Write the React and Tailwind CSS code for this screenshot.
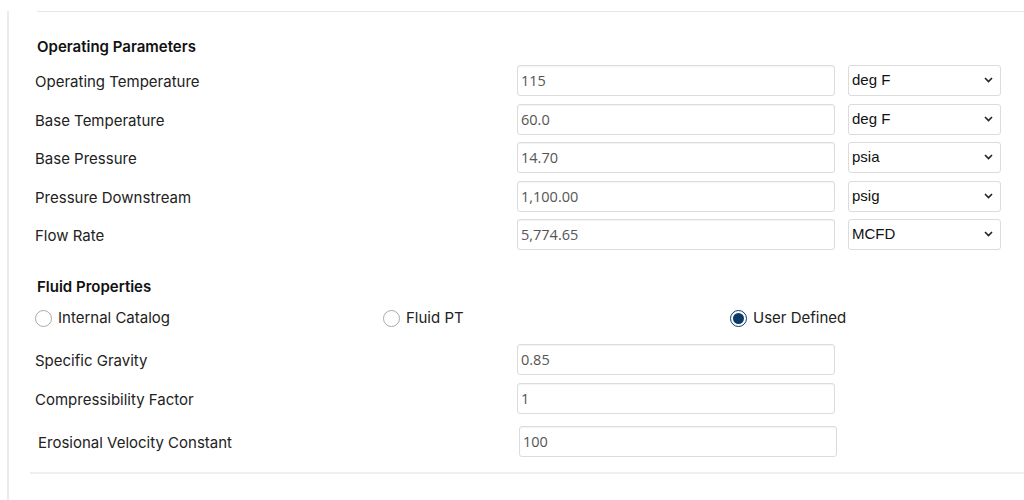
import React, { useState } from "react";

const labelFont = { fontFamily: "Inter, 'Noto Sans', sans-serif" };

const units = {
  temp: ["deg F", "deg C", "deg R", "K"],
  pres: ["psia", "kPa", "bar"],
  presg: ["psig", "kPag", "barg"],
  flow: ["MCFD", "MMCFD", "m3/d"],
};

const TextInput = ({ value, className = "" }) => (
  <input
    type="text"
    defaultValue={value}
    className={`h-[31px] w-[318px] rounded-[3px] border border-[#dcdcdc] bg-white px-[3px] text-[14.5px] text-[#555] shadow-[inset_0_1px_1px_rgba(0,0,0,0.05)] outline-none font-['Open_Sans',sans-serif] ${className}`}
  />
);

const UnitSelect = ({ options }) => (
  <div className="relative h-[31px] w-[153px]">
    <select className="h-full w-full appearance-none rounded-[3px] border border-[#dcdcdc] bg-white pl-[3px] text-[15px] text-[#111] outline-none font-['Liberation_Sans',Arial,sans-serif]">
      {options.map((o) => (
        <option key={o}>{o}</option>
      ))}
    </select>
    <svg
      className="pointer-events-none absolute right-[8px] top-[12px]"
      width="9"
      height="6"
      viewBox="0 0 9 6"
      fill="none"
      stroke="#222"
      strokeWidth="1.6"
    >
      <path d="M1 1l3.5 3.5L8 1" />
    </svg>
  </div>
);

const Row = ({ label, value, options }) => (
  <div className="flex h-[31px] items-center">
    <div className="w-[482px] pt-[4px] text-[15px] text-[#222]" style={labelFont}>
      {label}
    </div>
    <TextInput value={value} />
    {options && (
      <div className="ml-[13px]">
        <UnitSelect options={options} />
      </div>
    )}
  </div>
);

const Radio = ({ label, checked, onClick }) => (
  <button type="button" onClick={onClick} className="flex items-center gap-[6px]">
    {checked ? (
      <span className="flex h-[17px] w-[17px] items-center justify-center rounded-full border border-[#0b3a6a] bg-white">
        <span className="h-[11px] w-[11px] rounded-full bg-[#0b3a6a]" />
      </span>
    ) : (
      <span className="h-[17px] w-[17px] rounded-full border border-[#a9a9a9] bg-white" />
    )}
    <span className="text-[15px] text-[#222]" style={labelFont}>
      {label}
    </span>
  </button>
);

export default function App() {
  const [source, setSource] = useState("user");

  return (
    <div className="h-[500px] w-full overflow-hidden bg-white">
      <div className="ml-[7px] h-full border-l-2 border-[#ebebeb]">
        <div className="ml-[28px] mt-[11px] border-t border-[#e6e6e6]" />

        <div className="pl-[26px] pt-[25px]">
          <h2 className="h-[20px] pl-[2px] text-[15px] font-semibold leading-[20px] text-[#111]" style={labelFont}>
            Operating Parameters
          </h2>

          <div className="mt-[8px] flex flex-col gap-[7.5px]">
            <Row label="Operating Temperature" value="115" options={units.temp} />
            <Row label="Base Temperature" value="60.0" options={units.temp} />
            <Row label="Base Pressure" value="14.70" options={units.pres} />
            <Row label="Pressure Downstream" value="1,100.00" options={units.presg} />
            <Row label="Flow Rate" value="5,774.65" options={units.flow} />
          </div>

          <h2 className="mt-[27px] h-[20px] pl-[2px] text-[15px] font-semibold leading-[20px] text-[#111]" style={labelFont}>
            Fluid Properties
          </h2>

          <div className="mt-[10px] grid h-[20px] grid-cols-[348px_347px_1fr] items-center">
            <Radio label="Internal Catalog" checked={source === "catalog"} onClick={() => setSource("catalog")} />
            <Radio label="Fluid PT" checked={source === "pt"} onClick={() => setSource("pt")} />
            <Radio label="User Defined" checked={source === "user"} onClick={() => setSource("user")} />
          </div>

          <div className="mt-[17px] flex flex-col gap-[8px]">
            <Row label="Specific Gravity" value="0.85" />
            <Row label="Compressibility Factor" value="1" />
          </div>

          <div className="mt-[12px] flex h-[31px] items-center pl-[3px]">
            <div className="w-[481px] pt-[4px] text-[15px] text-[#222]" style={labelFont}>
              Erosional Velocity Constant
            </div>
            <TextInput value="100" className="w-[317px]" />
          </div>
        </div>

        <div className="ml-[21px] mt-[15px] border-t-2 border-[#efefef]" />
      </div>
    </div>
  );
}
